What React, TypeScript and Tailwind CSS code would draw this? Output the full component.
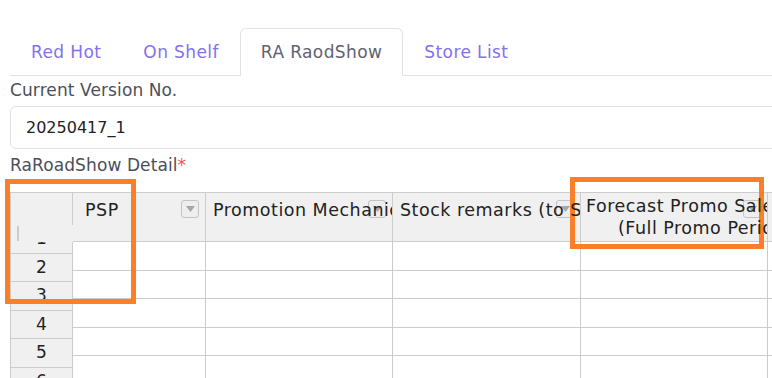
const tabs = ["Red Hot", "On Shelf", "RA RaodShow", "Store List"];
const activeTab = "RA RaodShow";

const rows = [1, 2, 3, 4, 5, 6];

interface Col {
  width: string;
  title?: string;
  lines?: string[];
  pad?: string;
}

const columns: Col[] = [
  { width: "w-[133px]", title: "PSP", pad: "pl-[12px]" },
  { width: "w-[187px]", title: "Promotion Mechanic" },
  { width: "w-[188px]", title: "Stock remarks (to SKU)" },
  { width: "w-[187px]", lines: ["Forecast Promo Sales", "(Full Promo Period)"] },
  { width: "w-[120px]", title: "Actual" },
];

function FilterButton() {
  return (
    <div className="absolute right-[6px] top-[7px] w-[18px] h-[18px] border border-[#c4c4c4] rounded-[3px] bg-[#eeeeee] flex items-center justify-center">
      <svg width="9" height="6" viewBox="0 0 9 6">
        <path d="M0 0 L9 0 L4.5 6 Z" fill="#a6a6a6" />
      </svg>
    </div>
  );
}

function HeaderCell({ col }: { col: Col }) {
  return (
    <div className={`${col.width} shrink-0 h-[49px] relative overflow-hidden bg-[#f0f0f0] border-r border-b border-[#cccccc]`}>
      <FilterButton />
      {col.lines ? (
        <div className="relative z-10 pt-[2px] text-[17.5px] tracking-[0.5px] leading-[22px] text-[#222] whitespace-nowrap">
          <div className="pl-[5px]">{col.lines[0]}</div>
          <div className="pl-[37px]">{col.lines[1]}</div>
        </div>
      ) : (
        <div className={`relative z-10 ${col.pad ?? "pl-[7px]"} pt-[5px] text-[17.5px] tracking-[0.5px] leading-[24px] text-[#222] whitespace-nowrap`}>
          {col.title}
        </div>
      )}
    </div>
  );
}

export default function App() {
  return (
    <div className="w-[772px] h-[378px] overflow-hidden bg-white relative font-['DejaVu_Sans',sans-serif] text-[17px]">
      <div className="pl-[10px] pt-[28px] w-[900px]">
        <div className="flex border-b border-[#dee2e6] h-[48px]">
          {tabs.map((t) => (
            <div
              key={t}
              className={
                t === activeTab
                  ? "px-[20px] h-[48px] -mb-px border border-[#dee2e6] border-b-white bg-white rounded-t-[6px] leading-[46px] tracking-[0.4px] text-[#5f6270]"
                  : "px-[20px] h-[48px] -mb-px border border-transparent leading-[46px] tracking-[0.4px] text-[#8271f2]"
              }
            >
              {t}
            </div>
          ))}
        </div>

        <div className="mt-[2px] leading-[24px] tracking-[0.1px] text-[#4b4f5c]">Current Version No.</div>
        <div className="mt-[4px] w-[800px] h-[43px] border border-[#dee2e6] rounded-[6px] pl-[15px] flex items-center text-[16px] text-[#222]">
          20250417_1
        </div>

        <div className="mt-[4px] leading-[24px] tracking-[0.1px] text-[#4b4f5c]">
          RaRoadShow Detail<span className="text-[#ea5455]">*</span>
        </div>

        <div className="mt-[15px] flex border-l border-t border-[#cccccc]">
          <div className="w-[62px] shrink-0 relative">
            <div className="h-[32px] bg-[#f0f0f0] border-r border-[#cccccc]" />
            {rows.map((r) => (
              <div
                key={r}
                className="h-[28.5px] bg-[#f0f0f0] border-r border-b border-[#cccccc] flex items-center justify-center text-[#222]"
              >
                {r}
              </div>
            ))}
            <div className="absolute left-0 right-0 top-[32px] h-[17px] bg-[#f0f0f0]">
              <div className="absolute left-[6px] top-[1px] w-[2px] h-[15px] bg-[#cccccc]" />
            </div>
          </div>

          {columns.map((col, i) => (
            <div key={i} className="flex flex-col">
              <HeaderCell col={col} />
              {rows.map((r) => (
                <div key={r} className={`${col.width} h-[28.5px] border-r border-b border-[#cccccc] bg-white`} />
              ))}
            </div>
          ))}
        </div>
      </div>

      <div className="absolute left-[5px] top-[179px] w-[131px] h-[125px] border-[5px] border-[#fa7f26] pointer-events-none" />
      <div className="absolute left-[570px] top-[177px] w-[194px] h-[72px] border-[5px] border-[#fa7f26] pointer-events-none" />
    </div>
  );
}
